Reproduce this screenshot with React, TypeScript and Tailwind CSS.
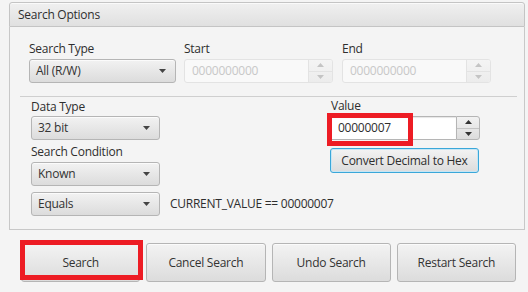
import React from "react";

const Arrow = ({ up = false, color = "#333" }: { up?: boolean; color?: string }) => (
  <svg width="7" height="4" viewBox="0 0 7 4" className="block">
    <path d={up ? "M0 4 L3.5 0 L7 4 Z" : "M0 0 L7 0 L3.5 4 Z"} fill={color} />
  </svg>
);

const Combo = ({ label, w }: { label: string; w: string }) => (
  <div
    className={`${w} shrink-0 h-[24px] flex items-center justify-between pl-[6px] pr-[9px] rounded-[3px] border border-[#b5b5b5] bg-gradient-to-b from-[#f2f2f2] to-[#dcdcdc] shadow-[inset_0_1px_0_#fbfbfb] text-[#333]`}
  >
    <span>{label}</span>
    <Arrow color="#444" />
  </div>
);

const DisabledSpinner = () => (
  <div className="w-[149px] h-[24px] flex rounded-[3px] border border-[#e3e3e3] bg-[#f9f9f9] overflow-hidden">
    <div className="flex-1 flex items-center pl-[7px] text-[#c8c8c8]">0000000000</div>
    <div className="w-[24px] flex flex-col border-l border-[#e3e3e3] bg-gradient-to-b from-[#f4f4f4] to-[#ececec]">
      <div className="flex-1 flex items-center justify-center border-b border-[#e3e3e3]">
        <Arrow up color="#c4c4c4" />
      </div>
      <div className="flex-1 flex items-center justify-center">
        <Arrow color="#c4c4c4" />
      </div>
    </div>
  </div>
);

const Btn = ({ label }: { label: string }) => (
  <div className="h-[39px] flex items-center justify-center rounded-[3px] border border-[#b5b5b5] bg-gradient-to-b from-[#f3f3f3] to-[#dcdcdc] shadow-[inset_0_1px_0_#fbfbfb] text-[#333]">
    {label}
  </div>
);

export default function App() {
  return (
    <div className="relative w-[528px] h-[292px] bg-[#f4f4f4] font-['Open_Sans',sans-serif] text-[12px] leading-[16px] tracking-[-0.25px] text-[#2e2e2e] pt-[2px] pl-[9px] overflow-hidden whitespace-nowrap">
      <div className="w-[516px]">
        {/* header */}
        <div className="h-[25px] flex items-center pl-[8px] rounded-t-[3px] border border-[#c4c4c4] bg-gradient-to-b from-[#f0f0f0] to-[#e0e0e0] shadow-[inset_0_1px_0_#fafafa]">
          Search Options
        </div>
        {/* content */}
        <div className="h-[203px] border-x border-b border-[#c8c8c8] bg-[#f4f4f4]">
          {/* section 1 */}
          <div className="flex pt-[14px] pl-[19px]">
            <div className="flex flex-col w-[147px]">
              <div className="h-[16px] mb-[2px]">Search Type</div>
              <Combo label="All (R/W)" w="w-[147px]" />
            </div>
            <div className="flex flex-col ml-[8px]">
              <div className="h-[16px] mb-[2px]">Start</div>
              <DisabledSpinner />
            </div>
            <div className="flex flex-col ml-[9px]">
              <div className="h-[16px] mb-[2px]">End</div>
              <DisabledSpinner />
            </div>
          </div>
          {/* separator */}
          <div className="ml-[10px] mt-[13px] w-[497px] h-px bg-[#cfcfcf]" />
          {/* section 2 */}
          <div className="flex pl-[21px] pt-[2px]">
            <div className="w-[297px] shrink-0 flex flex-col">
              <div className="h-[16px]">Data Type</div>
              <div className="mt-px">
                <Combo label="32 bit" w="w-[129px]" />
              </div>
              <div className="h-[16px] mt-[4px]">Search Condition</div>
              <div className="mt-[2px]">
                <Combo label="Known" w="w-[129px]" />
              </div>
              <div className="mt-[6px] flex items-center">
                <Combo label="Equals" w="w-[129px]" />
                <span className="ml-[10px]">CURRENT_VALUE == 00000007</span>
              </div>
            </div>
            <div className="flex flex-col w-[152px] shrink-0 -mt-px">
              <div className="h-[16px] ml-[3px]">Value</div>
              <div className="mt-[2px] h-[24px] flex">
                <div className="flex-1 flex items-center pl-[9px] bg-white border border-[#b5b5b5] border-r-0 rounded-l-[3px] shadow-[inset_0_1px_1px_#e6e6e6]">
                  00000007
                </div>
                <div className="w-[24px] flex flex-col rounded-r-[3px] border border-[#b5b5b5] bg-gradient-to-b from-[#f2f2f2] to-[#dcdcdc] overflow-hidden">
                  <div className="flex-1 flex items-center justify-center border-b border-[#c4c4c4]">
                    <Arrow up color="#333" />
                  </div>
                  <div className="flex-1 flex items-center justify-center">
                    <Arrow color="#333" />
                  </div>
                </div>
              </div>
              <div className="mt-[8px] ml-[2px] w-[149px] h-[25px] flex items-center justify-center rounded-[3px] border border-[#3aa7d9] shadow-[inset_0_0_0_1px_#c6e6f5] bg-gradient-to-b from-[#f3f3f3] to-[#dcdcdc]">
                Convert Decimal to Hex
              </div>
            </div>
          </div>
        </div>
        {/* buttons */}
        <div className="grid grid-cols-4 gap-[6px] w-[495px] ml-[12px] mt-[13px]">
          <Btn label="Search" />
          <Btn label="Cancel Search" />
          <Btn label="Undo Search" />
          <Btn label="Restart Search" />
        </div>
      </div>
      {/* red annotation boxes */}
      <div className="absolute left-[327px] top-[113px] w-[86px] h-[33px] border-[5px] border-[#ed1c24] pointer-events-none" />
      <div className="absolute left-[20px] top-[240px] w-[123px] h-[40px] border-[5px] border-[#ed1c24] pointer-events-none" />
    </div>
  );
}
